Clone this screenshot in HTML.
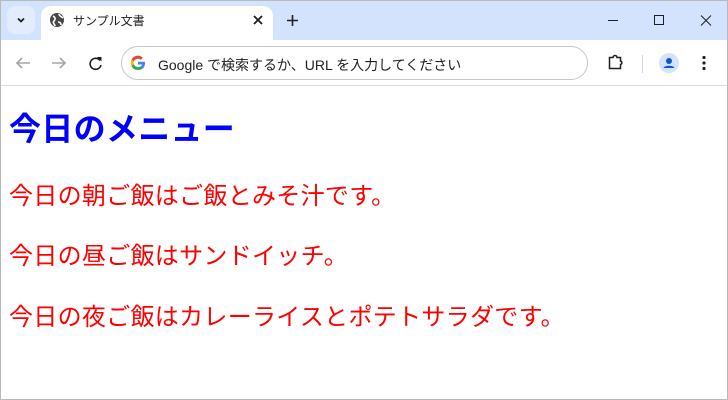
<!DOCTYPE html>
<html><head><meta charset="utf-8"><style>
*{margin:0;padding:0;box-sizing:border-box}
body{width:728px;height:400px;overflow:hidden;background:#fff;font-family:"Liberation Sans","Noto Sans CJK JP",sans-serif;position:relative}
.frame{position:absolute;inset:0;border:1px solid #b9b9b9;pointer-events:none;z-index:9}
.strip{position:absolute;left:0;top:0;width:728px;height:40px;background:#d3e3fd}
.tabbtn{position:absolute;left:7px;top:6px;width:28px;height:28px;border-radius:8px;background:#e3ecfc}
.tab{position:absolute;left:41px;top:6px;width:232px;height:34px;background:#fff;border-radius:10px 10px 0 0}
.tabtitle{position:absolute;left:73px;top:12px;font-size:12px;color:#1f1f1f}
.toolbar{position:absolute;left:0;top:40px;width:728px;height:46px;background:#fff;border-bottom:1px solid #dadce0}
.omni{position:absolute;left:121px;top:46px;width:467px;height:34px;border:1px solid #c4c7c5;border-radius:17px;background:#fff}
.omnitext{position:absolute;left:158px;top:55px;font-size:14px;color:#1f1f1f}
h1{position:absolute;left:9px;top:107px;font-size:32px;color:#0000ff;font-weight:bold;line-height:44px;white-space:nowrap;letter-spacing:0.3px}
p{position:absolute;left:9px;font-size:24px;color:#ff0000;line-height:30px;white-space:nowrap;letter-spacing:0.3px}
</style></head><body>
<div class="frame"></div>
<div class="strip"></div>
<div class="tabbtn"></div>
<svg style="position:absolute;left:15px;top:14px" width="12" height="12"><path d="M3 4.5l3 3 3-3" stroke="#1f1f1f" stroke-width="1.8" fill="none"/></svg>
<div class="tab"></div>
<svg style="position:absolute;left:49px;top:12px" width="16" height="16"><circle cx="8" cy="8" r="7" fill="#474747"/><path d="M4 4c2 1 3 3 1 5s1 3 1 5M10 2c0 2 3 3 4 4M9 10c2 0 3 1 3 3" stroke="#fff" stroke-width="1.6" fill="none"/></svg>
<div class="tabtitle">サンプル文書</div>
<svg style="position:absolute;left:252px;top:14px" width="12" height="12"><path d="M2 2l8 8M10 2l-8 8" stroke="#1f1f1f" stroke-width="1.8"/></svg>
<svg style="position:absolute;left:286px;top:14px" width="13" height="13"><path d="M6.5 1v11M1 6.5h11" stroke="#1f1f1f" stroke-width="1.6"/></svg>
<svg style="position:absolute;left:608px;top:14px" width="110" height="13"><path d="M0 6.5h10" stroke="#1f1f1f" stroke-width="1"/><rect x="46.5" y="1.5" width="9" height="9" fill="none" stroke="#1f1f1f"/><path d="M93 1.5l10 10M103 1.5l-10 10" stroke="#1f1f1f" stroke-width="1"/></svg>
<div class="toolbar"></div>
<svg style="position:absolute;left:14px;top:55px" width="100" height="16"><path d="M16 8H3M8 3L3 8l5 5" stroke="#a5a5a5" stroke-width="1.6" fill="none"/><path d="M38 8h13M46 3l5 5-5 5" stroke="#a5a5a5" stroke-width="1.6" fill="none"/><path d="M86 5.5A5.5 5.5 0 1 0 87 10" stroke="#1f1f1f" stroke-width="1.6" fill="none"/><path d="M83 2h4.5v4.5z" fill="#1f1f1f"/></svg>
<div class="omni"></div>
<svg style="position:absolute;left:130px;top:55px" width="16" height="16" viewBox="0 0 16 16"><path d="M15 8.2c0-.6 0-1-.1-1.5H8v2.8h4a3.4 3.4 0 0 1-1.5 2.2v1.8h2.4C14.2 12.3 15 10.4 15 8.2z" fill="#4285f4"/><path d="M8 15c2 0 3.7-.7 4.9-1.8l-2.4-1.8c-.7.4-1.5.7-2.5.7-1.900 0-3.5-1.3-4.1-3H1.5v1.9A7 7 0 0 0 8 15z" fill="#34a853"/><path d="M3.9 9.1a4.2 4.2 0 0 1 0-2.7V4.5H1.5a7 7 0 0 0 0 6.4z" fill="#fbbc05"/><path d="M8 3.8c1 0 2 .4 2.7 1.1l2.1-2.1A7 7 0 0 0 1.5 4.5l2.4 1.9C4.5 4.9 6.1 3.8 8 3.8z" fill="#ea4335"/></svg>
<div class="omnitext">Google で検索するか、URL を入力してください</div>
<svg style="position:absolute;left:607px;top:53px" width="18" height="18"><path d="M2.5 4.5h3.5a2 2 0 0 1 4 0h3.5v3.5a1.8 1.8 0 0 1 0 3.5v4H2.5z" fill="none" stroke="#1f1f1f" stroke-width="1.5"/></svg>
<div style="position:absolute;left:642px;top:55px;width:1px;height:18px;background:#c2d6f8"></div>
<svg style="position:absolute;left:659px;top:53px" width="20" height="20"><circle cx="10" cy="10" r="10" fill="#d3e3fd"/><circle cx="10" cy="8" r="3" fill="#0b57d0"/><path d="M4.5 15c1-3 10-3 11 0z" fill="#0b57d0"/></svg>
<svg style="position:absolute;left:702px;top:55px" width="4" height="16"><circle cx="2" cy="2.5" r="1.6" fill="#1f1f1f"/><circle cx="2" cy="8" r="1.6" fill="#1f1f1f"/><circle cx="2" cy="13.5" r="1.6" fill="#1f1f1f"/></svg>
<h1>今日のメニュー</h1>
<p style="top:182px">今日の朝ご飯はご飯とみそ汁です。</p>
<p style="top:242px">今日の昼ご飯はサンドイッチ。</p>
<p style="top:303px">今日の夜ご飯はカレーライスとポテトサラダです。</p>
</body></html>
